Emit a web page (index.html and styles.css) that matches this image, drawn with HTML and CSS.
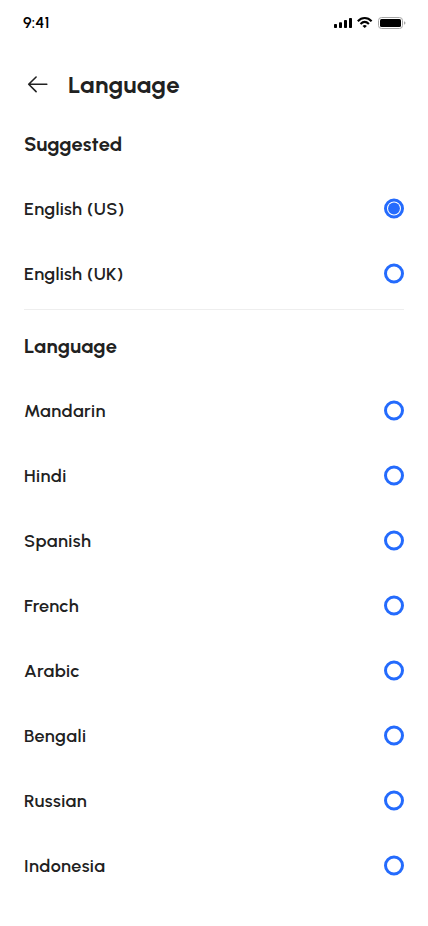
FILE: index.html
```html
<!DOCTYPE html>
<html lang="en">
<head>
<meta charset="utf-8">
<meta name="viewport" content="width=device-width, initial-scale=1">
<title>Language</title>
<link rel="stylesheet" href="styles.css">
</head>
<body>
<main class="screen">
  <div class="status">
    <span class="time">9:41</span>
    <svg class="indicators" width="74" height="16" viewBox="0 0 74 16">
      <rect x="1" y="9" width="3" height="4" rx=".8"/>
      <rect x="6" y="7.2" width="3" height="5.8" rx=".8"/>
      <rect x="11" y="5" width="3" height="8" rx=".8"/>
      <rect x="16" y="3" width="3" height="10" rx=".8"/>
      <g class="wifi">
        <path d="M24.8 6.2C28.9 2 34.500 2 38.600 6.200"/>
        <path d="M27.500 8.900C30.100 6.400 33.300 6.400 35.900 8.900"/>
      </g>
      <path d="M29.500 10.900Q31.700 9.100 33.900 10.900L31.700 13.100Z"/>
      <rect class="shell" x="45.500" y="2.500" width="24" height="11" rx="3"/>
      <rect x="47" y="4" width="21" height="8" rx="1.500"/>
      <path class="tip" d="M71 6.200Q72.500 6.800 72.500 8T71 9.800Z"/>
    </svg>
  </div>
  <header class="header">
    <svg class="back" width="28" height="28" viewBox="0 0 28 28" role="img" aria-label="Back">
      <path d="M22.800 14.300H4.700M12.100 7L4.700 14.300L12.100 21.600"/>
    </svg>
    <h1>Language</h1>
  </header>
  <section class="group">
    <h2 class="suggested">Suggested</h2>
    <ul>
      <li><span class="english">English (US)</span><svg class="radio" viewBox="0 0 20 20"><circle class="ring" cx="10" cy="9.500" r="8.500"/><circle class="dot" cx="10" cy="9.500" r="5.900"/></svg></li>
      <li><span class="english">English (UK)</span><svg class="radio" viewBox="0 0 20 20"><circle class="ring" cx="10" cy="9.500" r="8.500"/></svg></li>
    </ul>
  </section>
  <hr>
  <section class="group">
    <h2>Language</h2>
    <ul>
      <li><span>Mandarin</span><svg class="radio" viewBox="0 0 20 20"><circle class="ring" cx="10" cy="9.500" r="8.500"/></svg></li>
      <li><span>Hindi</span><svg class="radio" viewBox="0 0 20 20"><circle class="ring" cx="10" cy="9.500" r="8.500"/></svg></li>
      <li><span>Spanish</span><svg class="radio" viewBox="0 0 20 20"><circle class="ring" cx="10" cy="9.500" r="8.500"/></svg></li>
      <li><span class="french">French</span><svg class="radio" viewBox="0 0 20 20"><circle class="ring" cx="10" cy="9.500" r="8.500"/></svg></li>
      <li><span>Arabic</span><svg class="radio" viewBox="0 0 20 20"><circle class="ring" cx="10" cy="9.500" r="8.500"/></svg></li>
      <li><span>Bengali</span><svg class="radio" viewBox="0 0 20 20"><circle class="ring" cx="10" cy="9.500" r="8.500"/></svg></li>
      <li><span>Russian</span><svg class="radio" viewBox="0 0 20 20"><circle class="ring" cx="10" cy="9.500" r="8.500"/></svg></li>
      <li><span>Indonesia</span><svg class="radio" viewBox="0 0 20 20"><circle class="ring" cx="10" cy="9.500" r="8.500"/></svg></li>
    </ul>
  </section>
</main>
</body>
</html>
```
FILE: styles.css
```css
* { box-sizing: border-box; }
body {
  margin: 0;
  background: #fff;
  color: #212121;
  font-family: Urbanist, Lato, sans-serif;
}
.screen { height: 926px; padding: 0 24px; overflow: hidden; }
.status {
  display: flex;
  justify-content: space-between;
  align-items: center;
  height: 44px;
  margin: 0 -3px 0 -1px;
  padding-top: 1px;
  color: #000;
}
.time { padding-top: 1px; font-size: 16px; font-weight: 600; line-height: 20px; letter-spacing: .1px; }
.indicators { display: block; }
.wifi { fill: none; stroke: #000; stroke-width: 2.1; }
.shell { fill: none; stroke: #a6a6a6; }
.tip { fill: #a6a6a6; }
.header { display: flex; align-items: center; gap: 16px; height: 80px; }
.back {
  fill: none;
  stroke: #212121;
  stroke-width: 1.6;
  stroke-linecap: round;
  stroke-linejoin: round;
}
h1, h2, ul { margin: 0; padding: 0; }
h1 { padding-top: 1px; font-size: 24px; line-height: 30px; font-weight: 700; letter-spacing: .5px; }
h2 { height: 40px; margin-bottom: 12px; font-size: 20px; line-height: 40px; font-weight: 700; letter-spacing: .4px; }
.suggested { letter-spacing: .15px; }
ul { list-style: none; }
li {
  display: flex;
  align-items: center;
  justify-content: space-between;
  height: 65px;
  font-size: 18px;
  line-height: 26px;
  font-weight: 600;
  letter-spacing: .48px;
}
.english { letter-spacing: .33px; }
.french { letter-spacing: .33px; }
.radio { width: 20px; height: 20px; overflow: visible; }
.ring { fill: #fff; stroke: #246bfd; stroke-width: 3; }
.dot { fill: #246bfd; }
hr { height: 1px; margin: 3px 0 16px; border: 0; background: #eee; }
```
